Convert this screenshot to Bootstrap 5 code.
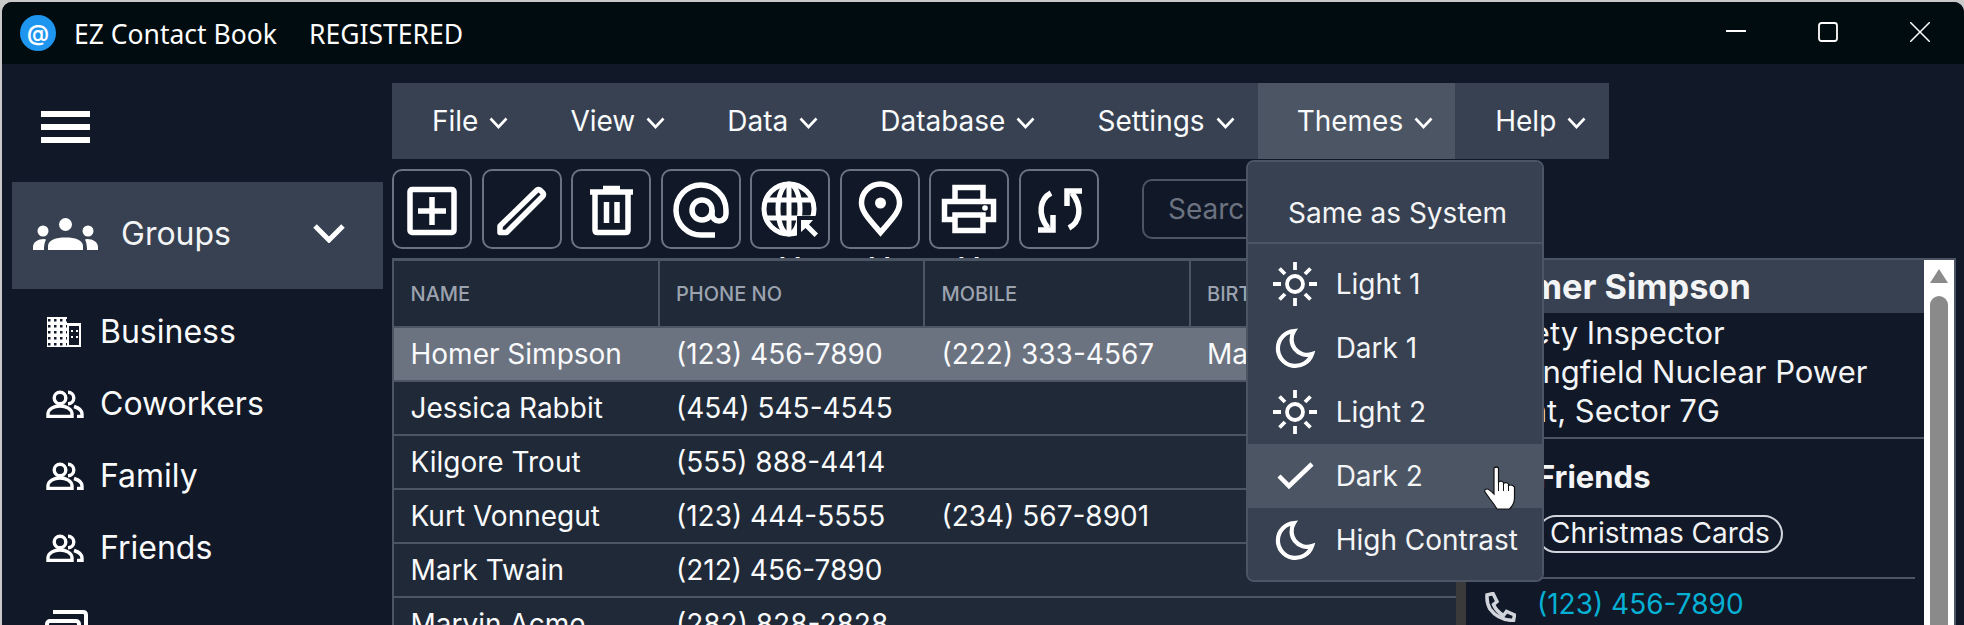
<!DOCTYPE html>
<html lang="en">
<head>
    <meta charset="UTF-8">
    <meta name="viewport" content="width=device-width, initial-scale=1.0">
    <title>EZ Contact Book</title>
    <link href="https://cdn.jsdelivr.net/npm/bootstrap@5.3.2/dist/css/bootstrap.min.css" rel="stylesheet">
    <style>
        html, body { height: 625px; overflow: hidden; background: #c9c9c9; }
        body { font-family: "Inter", "Liberation Sans", sans-serif; color: #f3f4f6; }
        .app-window { height: 625px; margin-top: 2px; margin-left: 2px; background: #111827; border-radius: 10px 10px 0 0; overflow: hidden; }
        .title-bar { height: 62px; flex: none; background: #010c11; color: #fff; font-family: "Noto Sans", "Open Sans", sans-serif; font-size: 26.5px; padding-left: 18px; }
        .title-txt { padding-top: 3px; }
        .app-logo { width: 36px; height: 36px; border-radius: 50%; background: #1e96f0; font-family: "Inter", sans-serif; font-size: 22px; font-weight: 600; margin-right: 18px; }
        .reg-tag { margin-left: 32px; }
        .win-btns { margin-left: auto; padding-right: 34px; padding-bottom: 2px; gap: 72px; }

        .side-col { width: 390px; flex: none; padding-top: 47px; }
        .burger { width: 49px; margin-left: 39px; }
        .burger i { display: block; height: 6px; background: #fff; margin-bottom: 7px; }
        .group-head { height: 107px; width: 371px; margin: 39px 0 7px 10px; background: #374151; padding: 0 38px 4px 21px; font-size: 32px; }
        .group-head span { margin-left: 23px; }
        .side-row { height: 72px; padding-left: 44px; font-size: 32px; color: #f9fafb; }
        .side-row svg { width: 38px; margin-right: 16px; flex: none; }
        .side-stack { margin: 26px 0 0 43px; }

        .main-col { width: 1572px; flex: none; padding-top: 19px; }
        .top-menu { width: 1217px; height: 76px; background: #374151; }
        .top-menu > .dropdown { height: 76px; }
        .menu-btn { height: 76px; padding: 0 22px 0 40px; font-size: 28px; color: #f9fafb; background: none; border: 0; white-space: nowrap; }
        .menu-btn svg { margin-left: 11px; }
        .menu-btn.on { background: #4b5563; margin-left: 1px; padding-left: 39px; }

        .tool-row { margin-top: 10px; height: 80px; gap: 9.5px; }
        .tool-btn { width: 80px; height: 80px; padding: 0; background: #111827; border: 2px solid #6b7280; border-radius: 10px; position: relative; }
        .tool-lbl { position: absolute; top: 83px; left: 0; width: 76px; text-align: center; color: #fff; font-size: 26px; line-height: 26px; }
        .find-box { width: 360px; height: 60px; margin: 10px 0 0 34px; background: #111827; border: 2px solid #4b5563; border-radius: 10px; color: #d1d5db; font-size: 28px; padding: 0 24px; }
        .find-box::placeholder { color: #6b7280; }

        .work-row { margin-top: 9px; position: relative; z-index: 1; height: 400px; }
        .grid-wrap { width: 1064px; flex: none; overflow: hidden; background: #1f2937; border-left: 2px solid #4b5563; border-top: 3px solid #4b5563; }
        .grid-tbl { width: 1062px; table-layout: fixed; margin: 0; border-collapse: separate; border-spacing: 0; --bs-table-bg: #1f2937; --bs-table-color: #f9fafb; --bs-table-border-color: #4b5563; font-size: 28px; }
        .grid-tbl th { height: 67px; padding: 0 0 0 16.5px; vertical-align: middle; font-size: 20px; font-weight: 500; color: #9ca3af; border-right: 2px solid #4b5563; border-bottom: 2px solid #4b5563; white-space: nowrap; overflow: hidden; }
        .grid-tbl td { height: 54px; padding: 0 0 0 16.5px; vertical-align: middle; border-bottom: 2px solid #4b5563; white-space: nowrap; overflow: hidden; }
        .grid-tbl tr.picked td { --bs-table-bg: #6b7280; }
        .split-bar { width: 10px; flex: none; background: #3a3a3a; }
        .info-pane { width: 490px; flex: none; border-top: 2px solid #4b5563; border-right: 2px solid #4b5563; font-size: 31px; }
        .info-main { width: 458px; flex: none; }
        .info-name { height: 53px; background: #374151; padding-left: 18px; font-size: 34.3px; font-weight: 700; color: #f3f4f6; }
        .info-lines { padding: 0 18px 7px; line-height: 39px; border-bottom: 2px solid #4b5563; white-space: nowrap; }
        .info-row { padding-left: 18px; }
        .info-ico { width: 53px; flex: none; }
        .info-group { font-weight: 700; height: 76px; }
        .tag-pill { border: 2px solid #d1d5db; border-radius: 20px; height: 38px; padding: 0 11px; font-size: 28px; line-height: 33px; }
        .info-rule { height: 2px; background: #4b5563; margin: 24px 9px 0 18px; }
        .phone-row { margin-top: 2px; }
        .phone-lnk { color: #06b0d4; text-decoration: none; font-size: 28px; }
        .scroll-col { width: 30px; flex: none; background: #fff; padding: 9px 6px 0; }
        .scroll-up { width: 0; height: 0; border-left: 9px solid transparent; border-right: 9px solid transparent; border-bottom: 14px solid #8a8a8a; }
        .scroll-thumb { height: 400px; margin-top: 13px; background: #8a8a8a; border-radius: 9px; }

        .theme-menu { --bs-dropdown-min-width: 298px; --bs-dropdown-bg: #374151; --bs-dropdown-border-color: #4b5563; --bs-dropdown-border-width: 2px; --bs-dropdown-border-radius: 8px; --bs-dropdown-padding-y: 0; --bs-dropdown-link-color: #f3f4f6; --bs-dropdown-font-size: 28px; left: -11px; top: 77px; width: 298px; height: 422px; z-index: 5; }
        .theme-menu .dropdown-item { height: 64px; padding: 0 0 0 24px; background: none; color: #f3f4f6; }
        .theme-menu .dropdown-item svg.mode-ico { width: 46px; margin-right: 18px; flex: none; }
        .theme-menu .dropdown-item.now { background: #4b5563; }
        .theme-head { height: 82px; padding: 30px 0 0 6px; border-bottom: 2px solid #4b5563; margin-bottom: 8px; font-size: 28px; color: #f3f4f6; }
        .hand-ptr { position: absolute; left: 236px; top: 22px; }
    </style>
</head>
<body>
    <svg width="0" height="0" class="position-absolute">
        <defs>
            <symbol id="chev" viewBox="0 0 19 12"><path d="M1.5 1.5 9.5 10l8-8.5" fill="none" stroke="#fff" stroke-width="2.6"/></symbol>
            <symbol id="people" viewBox="0 0 38 28"><g fill="none" stroke="#fff" stroke-width="3.4"><circle cx="14" cy="8" r="5.800"/><path d="M2 26.500V24c0-5 6-8 12-8s12 3 12 8v2.500z"/><path d="M22 2.200a5.800 5.800 0 0 1 0 11.600M28 16.500c5 1.500 8 4 8 7.500v2.500h-5"/></g></symbol>
            <symbol id="sun" viewBox="0 0 46 46"><g fill="none" stroke="#fff" stroke-width="3.8"><circle cx="23" cy="23" r="8"/><path d="M23 1v8M23 37v8M1 23h8M37 23h8M7.500 7.500l5.500 5.500M33 33l5.500 5.500M7.500 38.500 13 33M33 13l5.500-5.500"/></g></symbol>
            <symbol id="moon" viewBox="0 0 46 46"><path d="M22 6A17.500 17.500 0 1 0 40 29 15.500 15.500 0 0 1 22 6z" fill="none" stroke="#fff" stroke-width="4.200"/></symbol>
        </defs>
    </svg>

    <div class="app-window d-flex flex-column">
        <header class="title-bar d-flex align-items-center">
            <span class="app-logo d-flex align-items-center justify-content-center">@</span>
            <span class="title-txt">EZ Contact Book</span>
            <span class="title-txt reg-tag">REGISTERED</span>
            <div class="win-btns d-flex align-items-center">
                <svg width="20" height="20" viewBox="0 0 20 20"><path d="M0 9h20" stroke="#fff" stroke-width="1.800"/></svg>
                <svg width="20" height="20" viewBox="0 0 20 20"><rect x="1" y="1" width="18" height="18" rx="2.500" fill="none" stroke="#fff" stroke-width="1.800"/></svg>
                <svg width="20" height="20" viewBox="0 0 20 20"><path d="M0 0l20 20M20 0 0 20" stroke="#fff" stroke-width="1.500"/></svg>
            </div>
        </header>

        <div class="d-flex flex-grow-1">
            <aside class="side-col">
                <div class="burger"><i></i><i></i><i></i></div>
                <div class="group-head d-flex align-items-center">
                    <svg width="65" height="32" viewBox="0 0 65 32" fill="#fff">
                        <circle cx="32.500" cy="6.500" r="6.500"/><circle cx="10" cy="13" r="5.500"/><circle cx="55" cy="13" r="5.500"/>
                        <path d="M15 32v-4c0-6 8-8.500 17.500-8.500S50 22 50 28v4z"/>
                        <path d="M0 32v-3c0-5 5-8 11-8l2 .5c-1 2.500-2 4.500-2 10.500zM65 32v-3c0-5-5-8-11-8l-2 .5c1 2.500 2 4.500 2 10.500z"/>
                    </svg>
                    <span>Groups</span>
                    <svg class="ms-auto" width="32" height="19" viewBox="0 0 32 19"><path d="M2 2l14 14L30 2" fill="none" stroke="#fff" stroke-width="5"/></svg>
                </div>
                <div class="side-row d-flex align-items-center">
                    <svg height="30" viewBox="0 0 38 30">
                        <defs><pattern id="winGrid" width="6" height="6" patternUnits="userSpaceOnUse"><rect width="6" height="6" fill="#fff"/><rect x="2" y="2" width="2.500" height="2.500" fill="#111827"/></pattern></defs>
                        <rect x="1" width="20" height="30" fill="url(#winGrid)"/><rect x="21" y="6" width="14" height="24" fill="#fff"/><rect x="23" y="9" width="10" height="19" fill="#111827"/><path d="M25 13h2v2h-2zM30 13h2v2h-2zM25 19h2v2h-2zM30 19h2v2h-2z" fill="#fff"/>
                    </svg>
                    Business
                </div>
                <div class="side-row d-flex align-items-center"><svg height="28"><use href="#people"/></svg>Coworkers</div>
                <div class="side-row d-flex align-items-center"><svg height="28"><use href="#people"/></svg>Family</div>
                <div class="side-row d-flex align-items-center"><svg height="28"><use href="#people"/></svg>Friends</div>
                <svg class="d-block side-stack" width="44" height="32" viewBox="0 0 44 32"><g fill="none" stroke="#fff" stroke-width="4"><path d="M8 2h30q3 0 3 3v19"/><rect x="2" y="11" width="32" height="20" rx="3"/></g></svg>
            </aside>

            <main class="main-col d-flex flex-column">
                <nav class="top-menu d-flex">
                    <div class="dropdown"><button class="menu-btn">File<svg width="19" height="12"><use href="#chev"/></svg></button></div>
                    <div class="dropdown"><button class="menu-btn">View<svg width="19" height="12"><use href="#chev"/></svg></button></div>
                    <div class="dropdown"><button class="menu-btn">Data<svg width="19" height="12"><use href="#chev"/></svg></button></div>
                    <div class="dropdown"><button class="menu-btn">Database<svg width="19" height="12"><use href="#chev"/></svg></button></div>
                    <div class="dropdown"><button class="menu-btn">Settings<svg width="19" height="12"><use href="#chev"/></svg></button></div>
                    <div class="dropdown">
                        <button class="menu-btn on">Themes<svg width="19" height="12"><use href="#chev"/></svg></button>
                        <div class="dropdown-menu show theme-menu">
                            <div class="theme-head text-center">Same as System</div>
                            <a class="dropdown-item d-flex align-items-center" href="#"><svg class="mode-ico" height="46"><use href="#sun"/></svg>Light 1</a>
                            <a class="dropdown-item d-flex align-items-center" href="#"><svg class="mode-ico" height="46"><use href="#moon"/></svg>Dark 1</a>
                            <a class="dropdown-item d-flex align-items-center" href="#"><svg class="mode-ico" height="46"><use href="#sun"/></svg>Light 2</a>
                            <a class="dropdown-item now d-flex align-items-center position-relative" href="#">
                                <svg class="mode-ico" height="46" viewBox="0 0 46 46"><path d="M7 23l10 10L40 11" fill="none" stroke="#fff" stroke-width="4.500"/></svg>Dark 2
                                <svg class="hand-ptr" width="36" height="44" viewBox="0 0 36 44"><path d="M10 2q2.500-2 4.500 0V16q3-2 5 .5v1q3-2 5 .5v1.500q3.500-1.500 6 1.500V32q0 6-5 11H13Q10 38 6 33L1 26q-1-3 2-3 2 0 7 5z" fill="#fff" stroke="#111" stroke-width="1.200"/><path d="M14.500 16v9M19.500 18v7M24.500 19v6" stroke="#111" stroke-width="1"/></svg>
                            </a>
                            <a class="dropdown-item d-flex align-items-center" href="#"><svg class="mode-ico" height="46"><use href="#moon"/></svg>High Contrast</a>
                        </div>
                    </div>
                    <div class="dropdown"><button class="menu-btn">Help<svg width="19" height="12"><use href="#chev"/></svg></button></div>
                </nav>

                <div class="tool-row d-flex">
                    <button class="tool-btn d-flex align-items-center justify-content-center" title="Add">
                        <svg width="60" height="60" viewBox="0 0 60 60" fill="none" stroke="#fff" stroke-width="5.500"><rect x="8" y="10.500" width="44" height="43" rx="2"/><path d="M16 32h28M30 18v28"/></svg>
                    </button>
                    <button class="tool-btn d-flex align-items-center justify-content-center" title="Edit">
                        <svg width="60" height="60" viewBox="0 0 60 60" fill="none" stroke="#fff" stroke-width="5.500" stroke-linejoin="round"><path d="M8 53.500V47L45 11q1.500-1 3 0l3 3q1 1.500 0 3L14.500 53.500z"/></svg>
                    </button>
                    <button class="tool-btn d-flex align-items-center justify-content-center" title="Delete">
                        <svg width="60" height="60" viewBox="0 0 60 60" fill="none" stroke="#fff" stroke-width="5.500"><path d="M9 13h43M22 9.500h17M14 13v38q0 2.500 2.500 2.500h28q2.500 0 2.500-2.500V13M25.500 23v21M36 23v21"/></svg>
                    </button>
                    <button class="tool-btn d-flex align-items-center justify-content-center" title="Email">
                        <svg width="60" height="60" viewBox="0 0 60 60" fill="none" stroke="#fff" stroke-width="5.500"><path d="M44 56H31A25 25 0 1 1 55 31v4a7 7 0 0 1-14 0v-4"/><circle cx="31" cy="31" r="10"/></svg>
                    </button>
                    <button class="tool-btn d-flex align-items-center justify-content-center" title="Web">
                        <svg width="60" height="60" viewBox="0 0 60 60" fill="none" stroke="#fff" stroke-width="5"><circle cx="29" cy="30" r="25"/><ellipse cx="29" cy="30" rx="11" ry="25"/><path d="M6 21h46M6 39h46M29 5v50"/><rect x="37" y="37" width="23" height="23" fill="#111827" stroke="none"/><path d="M41 41h12l-4 4.500 9 9-3.500 3.500-9-9-4.500 4z" fill="#fff" stroke="none"/></svg>
                        <span class="tool-lbl">M</span>
                    </button>
                    <button class="tool-btn d-flex align-items-center justify-content-center" title="Map">
                        <svg width="60" height="60" viewBox="0 0 60 60" fill="none" stroke="#fff" stroke-width="5.500"><path d="M30.500 53.500C22 43 11.500 34 11.500 24a19 19 0 0 1 38 0c0 10-10.500 19-19 29.500z"/><circle cx="30.500" cy="24" r="5.500" fill="#fff" stroke="none"/></svg>
                        <span class="tool-lbl">M</span>
                    </button>
                    <button class="tool-btn d-flex align-items-center justify-content-center" title="Print">
                        <svg width="60" height="60" viewBox="0 0 60 60" fill="none" stroke="#fff" stroke-width="5.500"><path d="M16 22V8.500h28V22"/><path d="M16 40.500H5.500V22.500h49v18H44"/><rect x="16" y="36" width="28" height="15.500"/><circle cx="46" cy="29" r="2.800" fill="#fff" stroke="none"/></svg>
                        <span class="tool-lbl">M</span>
                    </button>
                    <button class="tool-btn d-flex align-items-center justify-content-center" title="Sync">
                        <svg width="60" height="60" viewBox="0 0 60 60" fill="none" stroke="#fff" stroke-width="5.500"><path d="M22 14C11 20 8 35 19 49"/><path d="M9 51h15V36"/><path d="M40 49C51 43 54 28 43 14"/><path d="M53 12H38v15"/></svg>
                    </button>
                    <input class="find-box form-control" type="text" placeholder="Search">
                </div>

                <div class="work-row d-flex">
                    <div class="grid-wrap">
                        <table class="table grid-tbl">
                            <thead>
                                <tr><th>NAME</th><th>PHONE NO</th><th>MOBILE</th><th>BIRTHDAY</th></tr>
                            </thead>
                            <tbody>
                                <tr class="picked"><td>Homer Simpson</td><td>(123) 456-7890</td><td>(222) 333-4567</td><td>May 12, 1956</td></tr>
                                <tr><td>Jessica Rabbit</td><td>(454) 545-4545</td><td></td><td></td></tr>
                                <tr><td>Kilgore Trout</td><td>(555) 888-4414</td><td></td><td></td></tr>
                                <tr><td>Kurt Vonnegut</td><td>(123) 444-5555</td><td>(234) 567-8901</td><td></td></tr>
                                <tr><td>Mark Twain</td><td>(212) 456-7890</td><td></td><td></td></tr>
                                <tr><td>Marvin Acme</td><td>(282) 828-2828</td><td></td><td></td></tr>
                            </tbody>
                        </table>
                    </div>
                    <div class="split-bar"></div>
                    <section class="info-pane d-flex">
                        <div class="info-main">
                            <div class="info-name d-flex align-items-center">Homer Simpson</div>
                            <div class="info-lines">Safety Inspector<br>Springfield Nuclear Power<br>Plant, Sector 7G</div>
                            <div class="info-row info-group d-flex align-items-center"><span class="info-ico"></span>Friends</div>
                            <div class="info-row d-flex align-items-center"><span class="info-ico"></span><span class="tag-pill">Christmas Cards</span></div>
                            <div class="info-rule"></div>
                            <div class="info-row phone-row d-flex align-items-center">
                                <span class="info-ico"><svg width="32" height="30" viewBox="0 0 32 30" fill="none" stroke="#d1d5db" stroke-width="3.500"><path d="M3 3l6-1.500 4 8-3.500 3c2 5 5 8 10 11l3-4 8 3.500-1 5.500Q14 28 6 17 2.500 11 3 3z"/></svg></span>
                                <a class="phone-lnk" href="#">(123) 456-7890</a>
                            </div>
                        </div>
                        <div class="scroll-col">
                            <div class="scroll-up"></div>
                            <div class="scroll-thumb"></div>
                        </div>
                    </section>
                </div>
            </main>
        </div>
    </div>
</body>
</html>
